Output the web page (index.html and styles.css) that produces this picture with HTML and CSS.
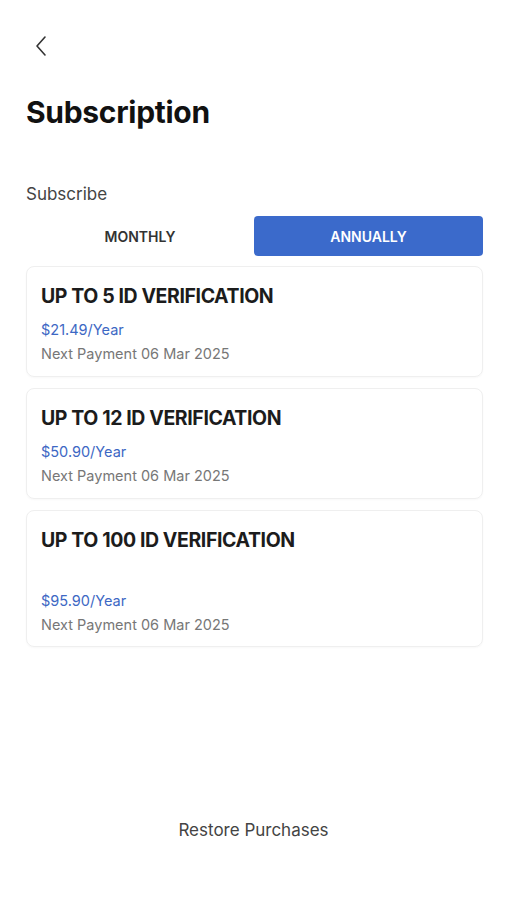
FILE: index.html
```html
<!DOCTYPE html>
<html>
<head>
<meta charset="utf-8">
<link rel="stylesheet" href="styles.css">
</head>
<body>
<div class="screen">
  <header class="topbar">
    <button class="back" aria-label="Back">
      <svg width="14" height="22" viewBox="0 0 14 22"><path d="M11 2 L3 11 L11 20" fill="none" stroke="#333" stroke-width="1.6" stroke-linecap="round" stroke-linejoin="round"/></svg>
    </button>
  </header>
  <h1 class="title">Subscription</h1>
  <div class="section-label">Subscribe</div>
  <div class="tabs">
    <div class="tab">MONTHLY</div>
    <div class="tab active">ANNUALLY</div>
  </div>
  <div class="plans">
    <div class="plan">
      <div class="plan-name">UP TO 5 ID VERIFICATION</div>
      <div class="plan-price">$21.49/Year</div>
      <div class="plan-next">Next Payment 06 Mar 2025</div>
    </div>
    <div class="plan">
      <div class="plan-name">UP TO 12 ID VERIFICATION</div>
      <div class="plan-price">$50.90/Year</div>
      <div class="plan-next">Next Payment 06 Mar 2025</div>
    </div>
    <div class="plan plan-tall">
      <div class="plan-name">UP TO 100 ID VERIFICATION</div>
      <div class="plan-price">$95.90/Year</div>
      <div class="plan-next">Next Payment 06 Mar 2025</div>
    </div>
  </div>
  <div class="spacer"></div>
  <div class="restore">Restore Purchases</div>
</div>
</body>
</html>
```

FILE: styles.css
```css
* { box-sizing: border-box; }
html, body { margin: 0; padding: 0; background: #fff; }
body { font-family: Inter, "Noto Sans", sans-serif; color: #222; }
.screen {
  width: 507px;
  height: 900px;
  display: flex;
  flex-direction: column;
  padding: 0 24px 0 26px;
}
.topbar { height: 70px; padding-top: 35px; }
.back {
  border: 0; background: none; padding: 0; margin-left: 8px;
  display: block; width: 14px; height: 22px; cursor: pointer;
}
.title {
  margin: 22px 0 0;
  font-size: 30px;
  font-weight: 700;
  letter-spacing: -0.3px;
  color: #111;
  line-height: 40px;
}
.section-label {
  margin-top: 51px;
  font-size: 17px;
  color: #444;
  line-height: 22px;
}
.tabs {
  margin-top: 11px;
  display: grid;
  grid-template-columns: 228px 1fr;
  height: 40px;
}
.tab {
  display: flex; align-items: center; justify-content: center;
  font-size: 14px; font-weight: 600; color: #333;
  border-radius: 4px;
}
.tab.active { background: #3b6acb; color: #fff; }
.plans {
  margin-top: 10px;
  display: flex;
  flex-direction: column;
  gap: 11px;
}
.plan {
  border: 1px solid #efefef;
  border-radius: 8px;
  padding: 17px 15px 14px 14px;
  height: 111px;
  box-shadow: 0 1px 2px rgba(0,0,0,0.03);
}
.plan-tall { height: 137px; }
.plan-tall .plan-price { margin-top: 39px; }
.plan-name {
  font-size: 19.5px;
  font-weight: 700;
  letter-spacing: -0.4px;
  color: #1c1c1c;
  line-height: 24px;
}
.plan-price {
  margin-top: 12px;
  font-size: 14.5px;
  color: #3d68c4;
  line-height: 20px;
}
.plan-next {
  margin-top: 4px;
  font-size: 14.5px;
  color: #777;
  line-height: 20px;
}
.spacer { flex: 1; }
.restore {
  text-align: center;
  font-size: 17px;
  color: #444;
  margin-bottom: 60px;
  padding-right: 2px;
}
```
